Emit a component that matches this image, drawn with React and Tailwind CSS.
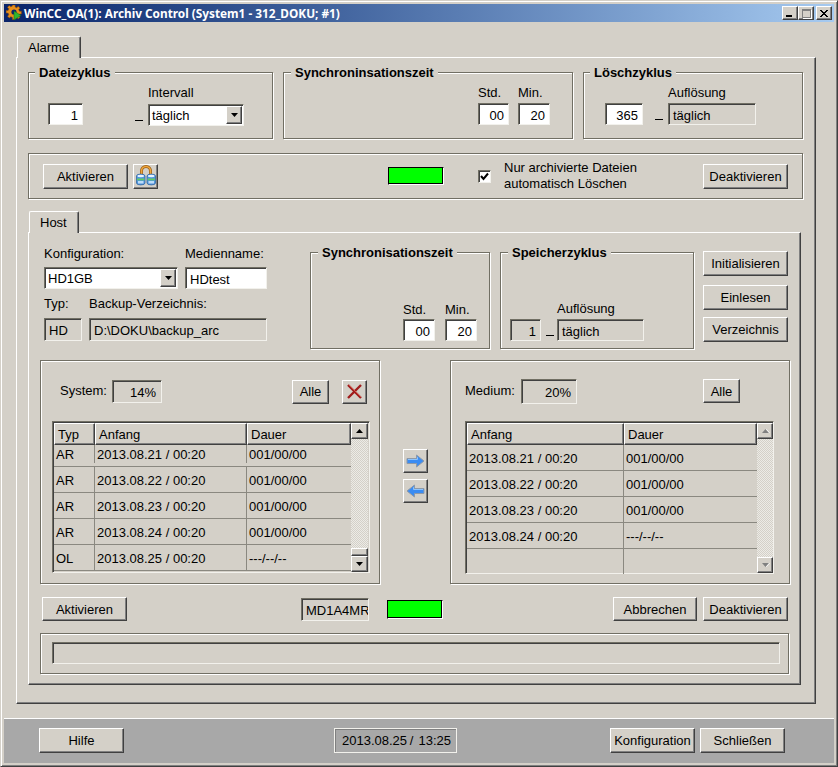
import React from "react";

const raised = "border border-t-white border-l-white border-r-[#404040] border-b-[#404040] shadow-[inset_-1px_-1px_0_#808080]";
const sunken = "border border-t-[#716f64] border-l-[#716f64] border-r-[#f2f1ec] border-b-[#f2f1ec] shadow-[inset_1px_1px_0_#404040]";
const etched = "border border-[#716f64] shadow-[1px_1px_0_#fff,inset_1px_1px_0_#fff]";
const dither = "bg-[repeating-conic-gradient(#ecebe6_0%_25%,#d4d0c8_0%_50%)] bg-size-[2px_2px]";

function Btn({ className = "", children }) {
  return <div className={`${raised} flex items-center justify-center shrink-0 bg-[#d4d0c8] ${className}`}>{children}</div>;
}
function Field({ className = "", children, white, right }) {
  return (
    <div className={`${sunken} flex items-center shrink-0 px-[4px] pt-[2px] whitespace-nowrap overflow-hidden ${white ? "bg-white" : "bg-[#d4d0c8]"} ${right ? "justify-end" : ""} ${className}`}>
      {children}
    </div>
  );
}
function Group({ title, titleLeft = "left-[7px]", className = "", children }) {
  return (
    <div className={`${etched} relative shrink-0 ${className}`}>
      {title && <div className={`absolute ${titleLeft} top-[-8px] h-[15px] px-[4px] bg-[#d4d0c8] font-bold leading-[15px] whitespace-nowrap`}>{title}</div>}
      {children}
    </div>
  );
}
function Tri({ down, gray }) {
  return (
    <svg width="9" height="6" viewBox="0 0 9 6">
      {gray && <path d={down ? "M2 1h7L5.500 5z" : "M5.500 1L9 5H2z"} fill="#fff" />}
      <path d={down ? "M1 1h7L4.500 5z" : "M4.500 1L8 5H1z"} fill={gray ? "#808080" : "#000"} />
    </svg>
  );
}
function Combo({ value, className = "" }) {
  return (
    <div className={`${sunken} bg-white flex items-center justify-between shrink-0 pl-[3px] ${className}`}>
      <span>{value}</span>
      <div className={`${raised} bg-[#d4d0c8] w-[16px] h-[18px] mr-px flex items-center justify-center`}><Tri down /></div>
    </div>
  );
}
function Led({ className = "" }) {
  return <div className={`border border-t-black border-l-black border-r-white border-b-white bg-[#00ff00] shadow-[inset_-1px_-1px_0_#000] shrink-0 ${className}`} />;
}
function Dash({ className = "" }) {
  return <div className={`w-[8px] h-px bg-black shrink-0 ${className}`} />;
}
function Labeled({ label, gap = "mb-[3px]", className = "", children }) {
  return (
    <div className={`flex flex-col shrink-0 ${className}`}>
      <div className={`h-[15px] leading-[15px] whitespace-nowrap ${gap}`}>{label}</div>
      {children}
    </div>
  );
}
function Arrow({ left }) {
  return (
    <svg width="19" height="14" viewBox="0 0 19 14">
      <g transform={left ? "translate(19 0) scale(-1 1)" : undefined}>
        <path d="M1 4.500h9.500V1L18 7l-7.500 6V9.500H1z" fill="#3b8cf2" stroke="#8f9aa8" strokeWidth="1" />
        <path d="M2 5.500h9.500V3.200" fill="none" stroke="#8cc4ff" strokeWidth="1" />
      </g>
    </svg>
  );
}
function LockIcon() {
  const Cyl = ({ x }) => (
    <g>
      <path d={`M${x} 11a4 1.800 0 0 1 8.500 0v7a4 1.800 0 0 1-8.500 0z`} fill="#4f94e0" stroke="#35689f" strokeWidth=".8" />
      <ellipse cx={x + 4.250} cy="11" rx="3.300" ry="1.200" fill="#e6f3ff" />
      <rect x={x + 0.600} y="13.500" width="7.300" height="1.800" fill="#62cc62" />
      <rect x={x + 1.500} y="16" width="5.500" height="2.500" fill="#bcdcfa" />
    </g>
  );
  return (
    <svg width="22" height="22" viewBox="0 0 22 22">
      <path d="M6.500 10V6a4.500 4.500 0 0 1 9 0v4" fill="none" stroke="#9a5e14" strokeWidth="3" />
      <path d="M6.500 10V6a4.500 4.500 0 0 1 9 0v4" fill="none" stroke="#f0a63c" strokeWidth="1.600" />
      <Cyl x={1.500} />
      <Cyl x={12} />
    </svg>
  );
}
function RedX() {
  return (
    <svg width="17" height="17" viewBox="0 0 17 17">
      <path d="M2 2l13 13M15 2L2 15" stroke="#a01c1c" strokeWidth="2.400" />
      <path d="M3 2l12 12" stroke="#e06a5c" strokeWidth="0.800" />
    </svg>
  );
}
function Gear() {
  return (
    <svg width="16" height="16" viewBox="0 0 16 16" className="shrink-0">
      <path d="M6 0h3v2.200l1.800.8L12.400 1.500l2 2L13 5.100l.8 1.900H16v3h-2.200l-.8 1.800 1.500 1.600-2 2-1.600-1.500-1.900.8V16H6v-2.200l-1.800-.8-1.600 1.500-2-2L2 10.900 1.200 9H-1V6h2.200L2 4.200.5 2.600l2-2L4.200 2 6 1.200z" transform="translate(1 0) scale(.9)" fill="#e8901c" stroke="#8a4a08" strokeWidth=".6" />
      <circle cx="8" cy="7" r="2.600" fill="#0a246a" />
      <path d="M8 6l7 4.500L8 15z" fill="#2fb52f" stroke="#0f6a1a" strokeWidth=".5" />
    </svg>
  );
}
function WinBtn({ className = "", children }) {
  return <div className={`${raised} bg-[#d4d0c8] w-[16px] h-[14px] flex items-center justify-center ${className}`}>{children}</div>;
}
function Scroll({ gray, thumb, className = "" }) {
  return (
    <div className={`flex flex-col w-[17px] ${className}`}>
      <div className={`${raised} bg-[#d4d0c8] h-[16px] flex items-center justify-center shrink-0`}><Tri gray={gray} /></div>
      <div className={`${dither} flex-1`} />
      {thumb && <div className={`${raised} bg-[#d4d0c8] h-[8px] shrink-0`} />}
      <div className={`${raised} bg-[#d4d0c8] h-[16px] flex items-center justify-center shrink-0`}><Tri down gray={gray} /></div>
    </div>
  );
}
const line = "border-r border-[#8a8880]";
function Head({ className = "", children }) {
  return <div className={`${raised} h-[22px] flex items-center pl-[3px] shrink-0 ${className}`}>{children}</div>;
}

const leftRows = [
  ["AR", "2013.08.21 / 00:20", "001/00/00"],
  ["AR", "2013.08.22 / 00:20", "001/00/00"],
  ["AR", "2013.08.23 / 00:20", "001/00/00"],
  ["AR", "2013.08.24 / 00:20", "001/00/00"],
  ["OL", "2013.08.25 / 00:20", "---/--/--"],
];
const rightRows = [
  ["2013.08.21 / 00:20", "001/00/00"],
  ["2013.08.22 / 00:20", "001/00/00"],
  ["2013.08.23 / 00:20", "001/00/00"],
  ["2013.08.24 / 00:20", "---/--/--"],
  ["", ""],
];

export default function App() {
  return (
    <div className="w-[838px] h-[767px] bg-[#d4d0c8] text-[13px] leading-[15px] text-black [font-family:'Liberation_Sans',sans-serif] border border-t-[#d4d0c8] border-l-[#d4d0c8] border-r-[#404040] border-b-[#404040] shadow-[inset_1px_1px_0_#fff,inset_-1px_-1px_0_#808080] p-[3px] flex flex-col overflow-hidden">
      {/* title bar */}
      <div className="h-[18px] shrink-0 bg-linear-to-r from-[#0a246a] to-[#a6caf0] flex items-center pl-[2px] pr-[2px]">
        <Gear />
        <div className="ml-[2px] text-white font-bold text-[11.800px] [font-family:'Noto_Sans',sans-serif] whitespace-nowrap">WinCC_OA(1): Archiv Control (System1 - 312_DOKU; #1)</div>
        <div className="ml-auto flex">
          <WinBtn><div className="w-[6px] h-[2px] bg-black mt-[6px] mr-[2px]" /></WinBtn>
          <WinBtn><div className="w-[9px] h-[9px] border border-[#808080] border-t-2 shadow-[1px_1px_0_#fff]" /></WinBtn>
          <WinBtn className="ml-[2px]">
            <svg width="8" height="7" viewBox="0 0 8 7"><path d="M0 0l7 7M1 0l7 7M7 0L0 7M8 0L1 7" stroke="#000" strokeWidth="1" /></svg>
          </WinBtn>
        </div>
      </div>

      {/* outer tab */}
      <div className="ml-[12px] mt-[14px]">
        <div className="ml-px w-[64px] h-[22px] bg-[#d4d0c8] border border-b-0 border-t-white border-l-white border-r-[#404040] rounded-t-[2px] shadow-[inset_-1px_0_0_#808080] pl-[10px] pt-[3px] relative z-10 -mb-px">Alarme</div>
        <div className={`${raised} w-[800px] h-[647px] pl-[11px] pt-[14px]`}>
          {/* row 1 */}
          <div className="flex gap-[10px]">
            <Group title="Dateizyklus" titleLeft="left-[6px]" className="w-[245px] h-[67px] flex items-end pl-[19px] pb-[12px]">
              <Field white right className="w-[35px] h-[22px] mb-px">1</Field>
              <Dash className="ml-[52px] mb-[5px]" />
              <Labeled label="Intervall" gap="mb-[4px]" className="ml-[5px]">
                <Combo value="täglich" className="w-[96px] h-[22px]" />
              </Labeled>
            </Group>
            <Group title="Synchroninsationszeit" className="w-[290px] h-[67px] flex items-end justify-end pr-[22px] pb-[13px] gap-[9px]">
              <Labeled label="Std."><Field white right className="w-[31px] h-[22px]">00</Field></Labeled>
              <Labeled label="Min."><Field white right className="w-[32px] h-[22px]">20</Field></Labeled>
            </Group>
            <Group title="Löschzyklus" titleLeft="left-[6px]" className="w-[220px] h-[67px] flex items-end pl-[21px] pb-[13px]">
              <Field white right className="w-[38px] h-[22px]">365</Field>
              <Dash className="ml-[12px] mb-[5px]" />
              <Labeled label="Auflösung" className="ml-[5px]">
                <Field className="w-[88px] h-[22px]">täglich</Field>
              </Labeled>
            </Group>
          </div>

          {/* row 2 */}
          <Group className="w-[775px] h-[46px] mt-[14px] flex items-center pl-[14px]">
            <Btn className="w-[85px] h-[25px]">Aktivieren</Btn>
            <Btn className="w-[25px] h-[25px] ml-[5px]"><LockIcon /></Btn>
            <Led className="w-[56px] h-[18px] ml-[230px]" />
            <div className={`${sunken} bg-white w-[13px] h-[13px] ml-[34px] flex items-center justify-center shrink-0`}>
              <svg width="9" height="9" viewBox="0 0 9 9"><path d="M1 4l2.500 3L8 1.500" fill="none" stroke="#000" strokeWidth="2" /></svg>
            </div>
            <div className="ml-[13px] w-[180px] leading-[16px]">Nur archivierte Dateien automatisch Löschen</div>
            <Btn className="w-[85px] h-[25px] ml-[19px]">Deaktivieren</Btn>
          </Group>

          {/* inner tab */}
          <div className="mt-[12px] ml-px w-[50px] h-[22px] bg-[#d4d0c8] border border-b-0 border-t-white border-l-white border-r-[#404040] rounded-t-[2px] shadow-[inset_-1px_0_0_#808080] pl-[10px] pt-[3px] relative z-10 -mb-px">Host</div>
          <div className={`${raised} w-[773px] h-[453px] pt-[13px]`}>
            {/* host row A */}
            <div className="flex items-start pl-[15px] h-[103px]">
              <div className="w-[223px] shrink-0">
                <div className="flex h-[15px]">
                  <div className="w-[141px]">Konfiguration:</div>
                  <div>Medienname:</div>
                </div>
                <div className="flex mt-[6px]">
                  <Combo value="HD1GB" className="w-[134px] h-[22px]" />
                  <Field white className="w-[82px] h-[22px] ml-[7px]">HDtest</Field>
                </div>
                <div className="flex mt-[7px] h-[15px]">
                  <div className="w-[45px]">Typ:</div>
                  <div>Backup-Verzeichnis:</div>
                </div>
                <div className="flex mt-[7px]">
                  <Field className="w-[38px] h-[23px]">HD</Field>
                  <Field className="w-[178px] h-[23px] ml-[7px]">D:\DOKU\backup_arc</Field>
                </div>
              </div>
              <Group title="Synchronisationszeit" className="w-[180px] h-[97px] ml-[43px] mt-[6px] flex items-end pl-[92px] pb-[7px] gap-[10px]">
                <Labeled label="Std." gap="mb-[2px]"><Field white right className="w-[32px] h-[22px]">00</Field></Labeled>
                <Labeled label="Min." gap="mb-[2px]"><Field white right className="w-[32px] h-[22px]">20</Field></Labeled>
              </Group>
              <Group title="Speicherzyklus" className="w-[194px] h-[97px] ml-[10px] mt-[6px] flex items-end pl-[9px] pb-[7px]">
                <Field right className="w-[31px] h-[22px]">1</Field>
                <Dash className="ml-[5px] mb-[5px]" />
                <Labeled label="Auflösung" gap="mb-[3px]" className="ml-[3px]">
                  <Field className="w-[87px] h-[22px]">täglich</Field>
                </Labeled>
              </Group>
              <div className="flex flex-col ml-[9px] mt-[5px]">
                <Btn className="w-[85px] h-[25px]">Initialisieren</Btn>
                <Btn className="w-[85px] h-[25px] mt-[9px]">Einlesen</Btn>
                <Btn className="w-[85px] h-[25px] mt-[7px]">Verzeichnis</Btn>
              </div>
            </div>

            {/* host row B */}
            <div className="flex items-start ml-[11px] mt-[11px]">
              <Group className="w-[340px] h-[224px] pl-[11px] pt-[18px]">
                <div className="flex items-center h-[25px]">
                  <div className="ml-[8px] w-[52px] -mt-[2px]">System:</div>
                  <Field right className="w-[50px] h-[23px] pr-[5px]">14%</Field>
                  <Btn className="w-[37px] h-[24px] ml-[130px]">Alle</Btn>
                  <Btn className="w-[25px] h-[24px] ml-[13px]"><RedX /></Btn>
                </div>
                <div className={`${sunken} w-[318px] h-[152px] mt-[17px] pt-px pl-px flex`}>
                  <div className="w-[297px] flex flex-col">
                    <div className="flex">
                      <Head className="w-[41px]">Typ</Head>
                      <Head className="w-[152px]">Anfang</Head>
                      <Head className="w-[104px]">Dauer</Head>
                    </div>
                    {leftRows.map((r, i) => (
                      <div key={i} className={`flex border-b border-[#8a8880] shrink-0 ${i === 0 ? "h-[22px] pb-[3px]" : "h-[26px]"}`}>
                        <div className={`${line} w-[41px] flex items-center pl-[2px] ${i === 0 ? "" : "pt-px"}`}>{r[0]}</div>
                        <div className={`${line} w-[152px] flex items-center pl-[2px] ${i === 0 ? "" : "pt-px"}`}>{r[1]}</div>
                        <div className={`w-[104px] flex items-center pl-[2px] ${i === 0 ? "" : "pt-px"}`}>{r[2]}</div>
                      </div>
                    ))}
                  </div>
                  <Scroll thumb />
                </div>
              </Group>

              <div className="flex flex-col w-[25px] ml-[23px] mt-[89px] gap-[6px] shrink-0">
                <Btn className="w-[25px] h-[24px]"><Arrow /></Btn>
                <Btn className="w-[25px] h-[24px]"><Arrow left /></Btn>
              </div>

              <Group className="w-[340px] h-[224px] ml-[22px] pl-[14px] pt-[17px]">
                <div className="flex items-center h-[26px]">
                  <div className="w-[56px] -mt-[2px]">Medium:</div>
                  <Field right className="w-[56px] h-[25px] pr-[5px]">20%</Field>
                  <Btn className="w-[37px] h-[24px] ml-[126px]">Alle</Btn>
                </div>
                <div className={`${sunken} w-[309px] h-[153px] mt-[17px] pt-px pl-px flex`}>
                  <div className="w-[290px] flex flex-col">
                    <div className="flex">
                      <Head className="w-[157px]">Anfang</Head>
                      <Head className="w-[133px]">Dauer</Head>
                    </div>
                    {rightRows.map((r, i) => (
                      <div key={i} className={`flex shrink-0 ${i === 4 ? "h-[25px]" : "h-[26px] border-b border-[#8a8880]"}`}>
                        <div className={`${line} w-[157px] flex items-center pl-[2px] pt-px`}>{r[0]}</div>
                        <div className="w-[133px] flex items-center pl-[2px] pt-px">{r[1]}</div>
                      </div>
                    ))}
                  </div>
                  <Scroll gray />
                </div>
              </Group>
            </div>

            {/* host row C */}
            <div className="flex items-center ml-[13px] mt-[13px] h-[24px]">
              <Btn className="w-[85px] h-[24px]">Aktivieren</Btn>
              <Field className="w-[68px] h-[23px] ml-[174px] px-[2px]">MD1A4MR</Field>
              <Led className="w-[56px] h-[19px] ml-[18px]" />
              <Btn className="w-[84px] h-[24px] ml-[170px]">Abbrechen</Btn>
              <Btn className="w-[85px] h-[24px] ml-[6px]">Deaktivieren</Btn>
            </div>

            {/* host row D */}
            <Group className="w-[749px] h-[41px] ml-[11px] mt-[12px] px-[11px] pt-[8px]">
              <div className={`${sunken} w-[728px] h-[22px]`} />
            </Group>
          </div>
        </div>
      </div>

      {/* footer */}
      <div className="mt-[14px] h-[45px] shrink-0 bg-[#a8a8a8] border-t border-white flex items-center pl-[35px] pb-[1px]">
        <Btn className="w-[85px] h-[25px]">Hilfe</Btn>
        <div className="ml-[210px] w-[123px] h-[25px] shrink-0 border border-[#f2f1ec] shadow-[inset_1px_1px_0_#808080] flex items-center justify-center pl-[2px] whitespace-pre [word-spacing:-1px]">2013.08.25 /  13:25</div>
        <Btn className="w-[85px] h-[25px] ml-[153px]">Konfiguration</Btn>
        <Btn className="w-[85px] h-[25px] ml-[5px]">Schließen</Btn>
      </div>
    </div>
  );
}
